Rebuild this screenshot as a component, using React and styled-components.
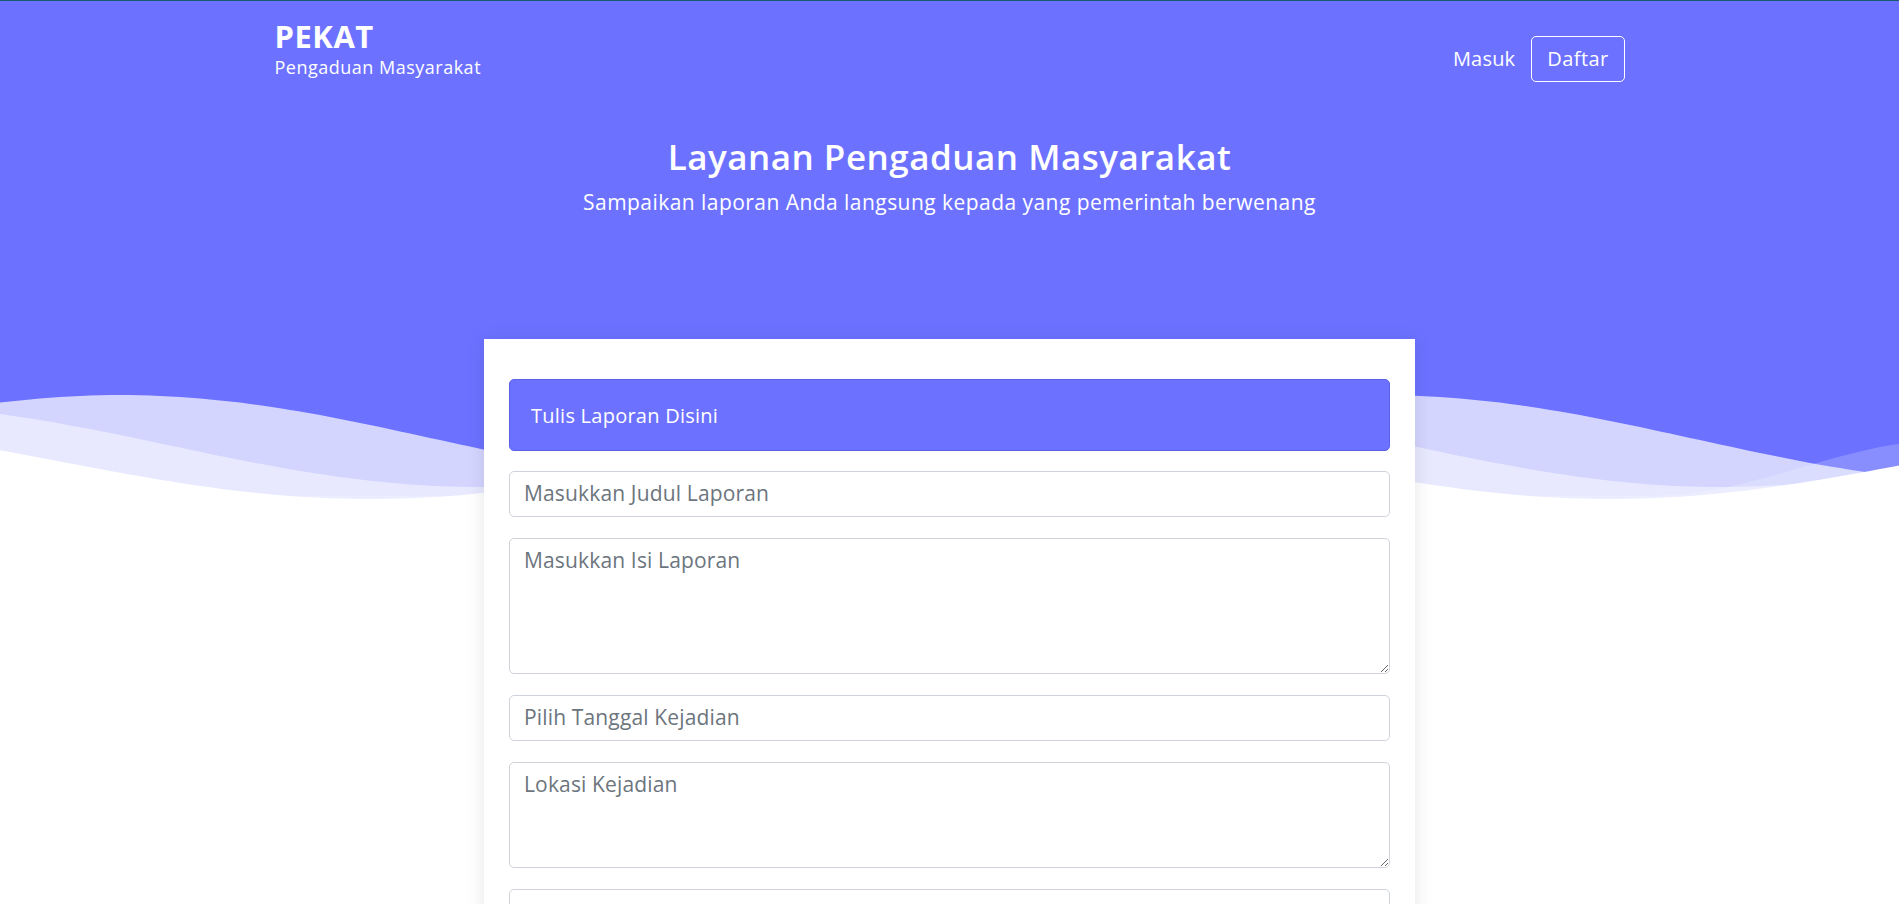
import React from 'react';
import styled, { createGlobalStyle } from 'styled-components';

const BLUE = '#6c72ff';

const GlobalStyle = createGlobalStyle`
  html { scrollbar-width: none; }
  html::-webkit-scrollbar, body::-webkit-scrollbar { display: none; }
  *, *::before, *::after { box-sizing: border-box; }
  body {
    margin: 0;
    background: #ffffff;
    font-family: "Open Sans", "Noto Sans", sans-serif;
    color: #212529;
  }
`;

const Hero = styled.header`
  background: ${BLUE};
  border-top: 1px solid #175c6b;
  color: #ffffff;
`;

const Navbar = styled.nav`
  width: 1350px;
  margin: 0 auto;
  padding-top: 17px;
  display: flex;
  justify-content: space-between;
  align-items: flex-start;
`;

const Brand = styled.a`
  display: flex;
  flex-direction: column;
  color: #ffffff;
  text-decoration: none;
`;

const BrandTitle = styled.span`
  font-size: 31px;
  font-weight: 700;
  line-height: 37px;
  letter-spacing: 0.5px;
`;

const BrandSub = styled.span`
  margin-top: 1px;
  font-size: 18px;
  font-weight: 400;
  line-height: 23px;
  letter-spacing: 0.5px;
`;

const Nav = styled.div`
  display: flex;
  align-items: center;
  gap: 16px;
  margin-top: 18px;
`;

const NavLink = styled.a`
  color: #ffffff;
  font-size: 20px;
  font-weight: 500;
  line-height: 30px;
  letter-spacing: 0.2px;
  text-decoration: none;
`;

const NavButton = styled.button`
  font-family: inherit;
  background: transparent;
  color: #ffffff;
  border: 1px solid #ffffff;
  border-radius: 5px;
  padding: 7px 15px;
  font-size: 20px;
  font-weight: 500;
  line-height: 30px;
  letter-spacing: 0.4px;
`;

const HeroText = styled.div`
  margin-top: 54px;
  text-align: center;
`;

const HeroTitle = styled.h1`
  margin: 0;
  font-size: 35px;
  font-weight: 600;
  line-height: 42px;
  letter-spacing: 0.5px;
`;

const HeroSubtitle = styled.p`
  margin: 11px 0 0;
  font-size: 21px;
  font-weight: 400;
  line-height: 26px;
  letter-spacing: 0.45px;
`;

const WaveSvg = styled.svg`
  display: block;
  width: 100%;
  height: 120px;
  margin-top: 175px;
`;

const Main = styled.main`
  padding-bottom: 60px;
`;

const Card = styled.section`
  position: relative;
  width: 931px;
  margin: -171px auto 0;
  background: #ffffff;
  padding: 40px 25px 30px;
  box-shadow: 0 2px 18px rgba(0, 0, 0, 0.1);
`;

const CardHeader = styled.div`
  height: 72px;
  display: flex;
  align-items: center;
  padding: 0 21px;
  margin-bottom: 20px;
  background: ${BLUE};
  border: 1px solid #5c62e6;
  border-radius: 5px;
  color: #ffffff;
  font-size: 20px;
  font-weight: 500;
  letter-spacing: 0.25px;
`;

const Form = styled.form`
  display: flex;
  flex-direction: column;
  gap: 21px;
`;

const Input = styled.input`
  display: block;
  width: 100%;
  height: 46px;
  padding: 4px 14px 7px;
  border: 1px solid #ced4da;
  border-radius: 5px;
  font-family: "Open Sans", "Noto Sans", sans-serif;
  font-size: 21px;
  letter-spacing: 0.15px;
  color: #495057;
  background: #ffffff;
  outline: none;
  &::placeholder { color: #6c757d; }
`;

const TextArea = styled.textarea`
  display: block;
  width: 100%;
  height: ${(p) => p.$h}px;
  padding: 6px 14px;
  border: 1px solid #ced4da;
  border-radius: 5px;
  font-family: "Open Sans", "Noto Sans", sans-serif;
  font-size: 21px;
  line-height: 30px;
  letter-spacing: 0.15px;
  color: #495057;
  background: #ffffff;
  outline: none;
  &::placeholder { color: #6c757d; }
`;

const W = 1899;
const buildPath = (fn) => {
  let d = `M0 ${fn(0).toFixed(1)}`;
  for (let x = 10; x < W; x += 10) d += ` L${x} ${fn(x).toFixed(1)}`;
  d += ` L${W} ${fn(W).toFixed(1)} L${W} 120 L0 120 Z`;
  return d;
};
const cosWave = (base, amp, phase, period) => (x) =>
  base + (amp * (1 - Math.cos((2 * Math.PI * (x - phase)) / period))) / 2;

const waveC = buildPath(cosWave(5, 88, 120, 1260));
const waveB = buildPath(cosWave(14, 83, -140, 1240));
const waveD = buildPath((x) => {
  if (x >= 1950) return 50;
  if (x <= 1650) return 106;
  return 50 + (55.6 * (1 - Math.cos((Math.PI * (1950 - x)) / 300))) / 2;
});
const waveA = buildPath(cosWave(34, 75, 990, 1240));

function Waves() {
  return (
    <WaveSvg viewBox={`0 0 ${W} 120`} preserveAspectRatio="none" aria-hidden="true">
      <path d={waveC} fill="#ffffff" fillOpacity="0.7" />
      <path d={waveB} fill="#ffffff" fillOpacity="0.48" />
      <path d={waveD} fill="#ffffff" fillOpacity="0.2" />
      <path d={waveA} fill="#ffffff" />
    </WaveSvg>
  );
}

export default function App() {
  return (
    <>
      <GlobalStyle />
      <Hero>
        <Navbar>
          <Brand href="#">
            <BrandTitle>PEKAT</BrandTitle>
            <BrandSub>Pengaduan Masyarakat</BrandSub>
          </Brand>
          <Nav>
            <NavLink href="#">Masuk</NavLink>
            <NavButton type="button">Daftar</NavButton>
          </Nav>
        </Navbar>
        <HeroText>
          <HeroTitle>Layanan Pengaduan Masyarakat</HeroTitle>
          <HeroSubtitle>Sampaikan laporan Anda langsung kepada yang pemerintah berwenang</HeroSubtitle>
        </HeroText>
        <Waves />
      </Hero>
      <Main>
        <Card>
          <CardHeader>Tulis Laporan Disini</CardHeader>
          <Form onSubmit={(e) => e.preventDefault()}>
            <Input type="text" placeholder="Masukkan Judul Laporan" />
            <TextArea $h={136} placeholder="Masukkan Isi Laporan" />
            <Input type="text" placeholder="Pilih Tanggal Kejadian" />
            <TextArea $h={106} placeholder="Lokasi Kejadian" />
            <Input type="text" aria-label="Instansi Tujuan" />
          </Form>
        </Card>
      </Main>
    </>
  );
}
